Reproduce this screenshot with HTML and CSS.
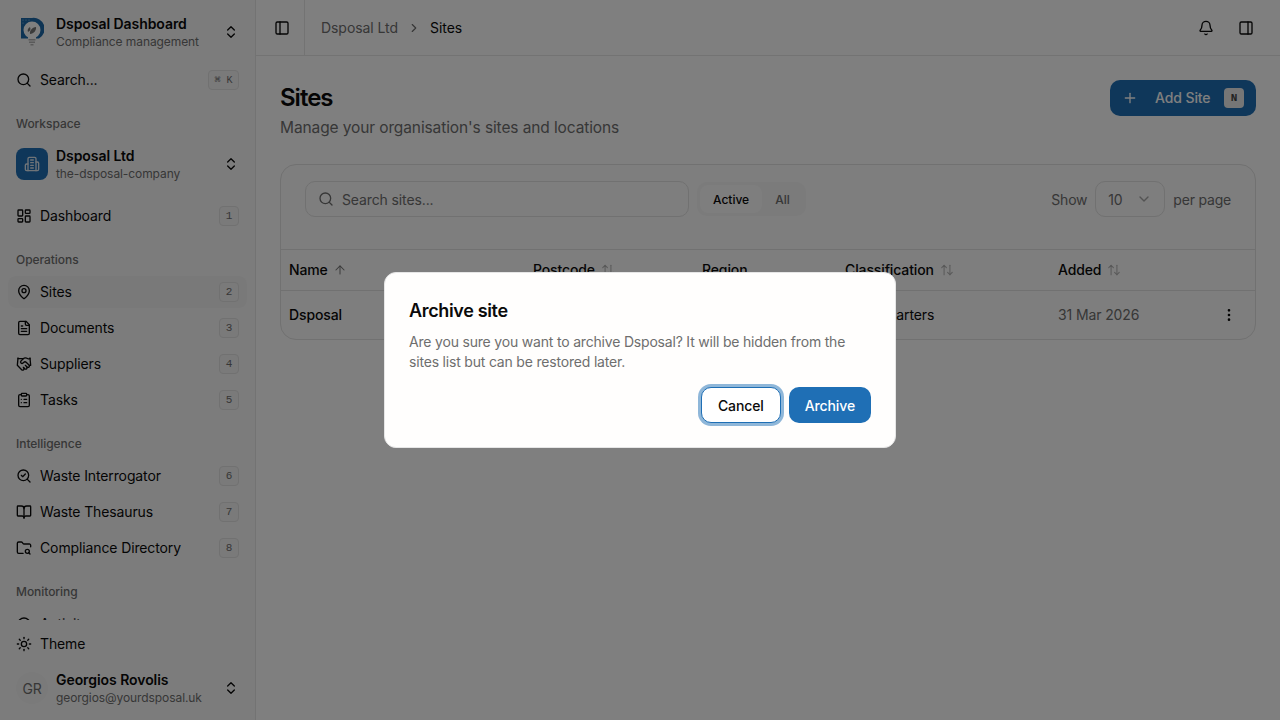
FILE: index.html
```html
<!DOCTYPE html>
<html lang="en">
<head>
<meta charset="utf-8">
<title>Sites</title>
<link rel="stylesheet" href="styles.css">
</head>
<body>
<svg class="defs" width="0" height="0" aria-hidden="true">
  <symbol id="i-search" viewBox="0 0 24 24"><circle cx="11" cy="11" r="8"/><path d="m21 21-4.3-4.3"/></symbol>
  <symbol id="i-updown" viewBox="0 0 24 24"><path d="m7 15 5 5 5-5"/><path d="m7 9 5-5 5 5"/></symbol>
  <symbol id="i-dash" viewBox="0 0 24 24"><rect width="7" height="9" x="3" y="3" rx="1"/><rect width="7" height="5" x="14" y="3" rx="1"/><rect width="7" height="9" x="14" y="12" rx="1"/><rect width="7" height="5" x="3" y="16" rx="1"/></symbol>
  <symbol id="i-pin" viewBox="0 0 24 24"><path d="M20 10c0 4.993-5.539 10.193-7.399 11.799a1 1 0 0 1-1.202 0C9.539 20.193 4 14.993 4 10a8 8 0 0 1 16 0"/><circle cx="12" cy="10" r="3"/></symbol>
  <symbol id="i-file" viewBox="0 0 24 24"><path d="M15 2H6a2 2 0 0 0-2 2v16a2 2 0 0 0 2 2h12a2 2 0 0 0 2-2V7Z"/><path d="M14 2v4a2 2 0 0 0 2 2h4"/><path d="M10 9H8"/><path d="M16 13H8"/><path d="M16 17H8"/></symbol>
  <symbol id="i-hands" viewBox="0 0 24 24"><path d="m11 17 2 2a1 1 0 1 0 3-3"/><path d="m14 14 2.5 2.5a1 1 0 1 0 3-3l-3.88-3.88a3 3 0 0 0-4.24 0l-.88.88a1 1 0 1 1-3-3l2.81-2.81a5.79 5.79 0 0 1 7.06-.87l.47.28a2 2 0 0 0 1.42.25L21 4"/><path d="m21 3 1 11h-2"/><path d="M3 3 2 14l6.5 6.5a1 1 0 1 0 3-3"/><path d="M3 4h8"/></symbol>
  <symbol id="i-clip" viewBox="0 0 24 24"><rect width="8" height="4" x="8" y="2" rx="1"/><path d="M16 4h2a2 2 0 0 1 2 2v14a2 2 0 0 1-2 2H6a2 2 0 0 1-2-2V6a2 2 0 0 1 2-2h2"/><path d="M12 11h4"/><path d="M12 16h4"/><path d="M8 11h.01"/><path d="M8 16h.01"/></symbol>
  <symbol id="i-scheck" viewBox="0 0 24 24"><path d="m8 11 2 2 4-4"/><circle cx="11" cy="11" r="8"/><path d="m21 21-4.3-4.3"/></symbol>
  <symbol id="i-book" viewBox="0 0 24 24"><path d="M12 7v14"/><path d="M3 18a1 1 0 0 1-1-1V4a1 1 0 0 1 1-1h5a4 4 0 0 1 4 4 4 4 0 0 1 4-4h5a1 1 0 0 1 1 1v13a1 1 0 0 1-1 1h-6a3 3 0 0 0-3 3 3 3 0 0 0-3-3z"/></symbol>
  <symbol id="i-folder" viewBox="0 0 24 24"><path d="M10.7 20H4a2 2 0 0 1-2-2V5a2 2 0 0 1 2-2h3.9a2 2 0 0 1 1.69.9l.81 1.2a2 2 0 0 0 1.67.9H20a2 2 0 0 1 2 2v2.3"/><circle cx="17" cy="17" r="3"/><path d="m21 21-1.9-1.9"/></symbol>
  <symbol id="i-activity" viewBox="0 0 24 24"><circle cx="12" cy="12" r="9"/><path d="M12 7v5l3 2"/></symbol>
  <symbol id="i-sun" viewBox="0 0 24 24"><circle cx="12" cy="12" r="4"/><path d="M12 2v2"/><path d="M12 20v2"/><path d="m4.93 4.93 1.41 1.41"/><path d="m17.66 17.66 1.41 1.41"/><path d="M2 12h2"/><path d="M20 12h2"/><path d="m6.34 17.66-1.41 1.41"/><path d="m19.07 4.93-1.41 1.41"/></symbol>
  <symbol id="i-pleft" viewBox="0 0 24 24"><rect width="18" height="18" x="3" y="3" rx="2"/><path d="M9 3v18"/></symbol>
  <symbol id="i-pright" viewBox="0 0 24 24"><rect width="18" height="18" x="3" y="3" rx="2"/><path d="M15 3v18"/></symbol>
  <symbol id="i-bell" viewBox="0 0 24 24"><path d="M10.268 21a2 2 0 0 0 3.464 0"/><path d="M3.262 15.326A1 1 0 0 0 4 17h16a1 1 0 0 0 .74-1.673C19.41 13.956 18 12.499 18 8A6 6 0 0 0 6 8c0 4.499-1.411 5.956-2.738 7.326"/></symbol>
  <symbol id="i-right" viewBox="0 0 24 24"><path d="m9 18 6-6-6-6"/></symbol>
  <symbol id="i-down" viewBox="0 0 24 24"><path d="m6 9 6 6 6-6"/></symbol>
  <symbol id="i-plus" viewBox="0 0 24 24"><path d="M5 12h14"/><path d="M12 5v14"/></symbol>
  <symbol id="i-up" viewBox="0 0 24 24"><path d="m5 12 7-7 7 7"/><path d="M12 19V5"/></symbol>
  <symbol id="i-sort" viewBox="0 0 24 24"><path d="m21 16-4 4-4-4"/><path d="M17 20V4"/><path d="m3 8 4-4 4 4"/><path d="M7 4v16"/></symbol>
  <symbol id="i-more" viewBox="0 0 24 24"><circle cx="12" cy="12" r="1"/><circle cx="12" cy="5" r="1"/><circle cx="12" cy="19" r="1"/></symbol>
  <symbol id="i-org" viewBox="0 0 24 24"><path d="M6 22V4a2 2 0 0 1 2-2h8a2 2 0 0 1 2 2v18Z"/><path d="M6 12H4a2 2 0 0 0-2 2v6a2 2 0 0 0 2 2h2"/><path d="M18 9h2a2 2 0 0 1 2 2v9a2 2 0 0 1-2 2h-2"/><path d="M10 6h4"/><path d="M10 10h4"/><path d="M10 14h4"/><path d="M10 18h4"/></symbol>
</svg>

<div class="app">
  <aside class="sidebar">
    <div class="brand">
      <svg class="logo" viewBox="0 0 24 30" width="24" height="30" aria-hidden="true">
        <path class="logo-d" d="M1 1h11a11 11 0 0 1 7 20.500H1z"/>
        <circle class="logo-bulb" cx="12" cy="13" r="8.500"/>
        <path class="logo-bulb" d="M8 19h8v4H8z"/>
        <path class="logo-leaf" d="M10 17c-.5-3.500 2-6.500 6-7 .5 3.500-2 6.500-6 7zM8 15c-1-2 0-4 2-5 1 2 .5 4-2 5z"/>
        <path class="logo-base" d="M8.500 22h7v1.500h-7zM9 24.500h6V26H9zM10.500 27h3v1.500h-3z"/>
        <circle class="logo-dot" cx="3" cy="3" r=".6"/><circle class="logo-dot" cx="6" cy="3" r=".6"/><circle class="logo-dot" cx="9" cy="3" r=".6"/><circle class="logo-dot" cx="3" cy="6" r=".6"/>
      </svg>
      <div class="two-line">
        <strong>Dsposal Dashboard</strong>
        <span>Compliance management</span>
      </div>
      <svg class="ic updown"><use href="#i-updown"/></svg>
    </div>

    <div class="search-row">
      <svg class="ic"><use href="#i-search"/></svg>
      <span class="grow">Search...</span>
      <kbd class="kbd wide">⌘ K</kbd>
    </div>

    <div class="group-label first">Workspace</div>
    <div class="org">
      <span class="org-icon"><svg class="ic"><use href="#i-org"/></svg></span>
      <div class="two-line">
        <strong>Dsposal Ltd</strong>
        <span>the-dsposal-company</span>
      </div>
      <svg class="ic updown"><use href="#i-updown"/></svg>
    </div>

    <nav class="nav">
      <a class="item"><svg class="ic"><use href="#i-dash"/></svg><span class="grow">Dashboard</span><kbd class="kbd">1</kbd></a>
      <div class="group-label">Operations</div>
      <a class="item active"><svg class="ic"><use href="#i-pin"/></svg><span class="grow">Sites</span><kbd class="kbd">2</kbd></a>
      <a class="item"><svg class="ic"><use href="#i-file"/></svg><span class="grow">Documents</span><kbd class="kbd">3</kbd></a>
      <a class="item"><svg class="ic"><use href="#i-hands"/></svg><span class="grow">Suppliers</span><kbd class="kbd">4</kbd></a>
      <a class="item"><svg class="ic"><use href="#i-clip"/></svg><span class="grow">Tasks</span><kbd class="kbd">5</kbd></a>
      <div class="group-label">Intelligence</div>
      <a class="item"><svg class="ic"><use href="#i-scheck"/></svg><span class="grow">Waste Interrogator</span><kbd class="kbd">6</kbd></a>
      <a class="item"><svg class="ic"><use href="#i-book"/></svg><span class="grow">Waste Thesaurus</span><kbd class="kbd">7</kbd></a>
      <a class="item"><svg class="ic"><use href="#i-folder"/></svg><span class="grow">Compliance Directory</span><kbd class="kbd">8</kbd></a>
      <div class="group-label">Monitoring</div>
      <a class="item"><svg class="ic"><use href="#i-activity"/></svg><span class="grow">Activity</span></a>
    </nav>

    <div class="foot">
      <a class="item"><svg class="ic"><use href="#i-sun"/></svg><span class="grow">Theme</span></a>
      <div class="user">
        <span class="avatar">GR</span>
        <div class="two-line">
          <strong>Georgios Rovolis</strong>
          <span>georgios@yourdsposal.uk</span>
        </div>
        <svg class="ic updown"><use href="#i-updown"/></svg>
      </div>
    </div>
  </aside>

  <main class="main">
    <header class="topbar">
      <div class="toggle"><svg class="ic"><use href="#i-pleft"/></svg></div>
      <div class="crumbs">
        <span class="crumb-muted">Dsposal Ltd</span>
        <svg class="ic crumb-sep"><use href="#i-right"/></svg>
        <span>Sites</span>
      </div>
      <div class="top-actions">
        <svg class="ic"><use href="#i-bell"/></svg>
        <svg class="ic"><use href="#i-pright"/></svg>
      </div>
    </header>

    <section class="content">
      <div class="page-head">
        <div>
          <h1>Sites</h1>
          <p>Manage your organisation's sites and locations</p>
        </div>
        <button class="add-btn">
          <svg class="ic"><use href="#i-plus"/></svg>
          <span>Add Site</span>
          <kbd class="kbd-n">N</kbd>
        </button>
      </div>

      <div class="card">
        <div class="toolbar">
          <div class="search-input">
            <svg class="ic"><use href="#i-search"/></svg>
            <span>Search sites...</span>
          </div>
          <div class="tabs">
            <span class="tab on">Active</span>
            <span class="tab">All</span>
          </div>
          <div class="pager">
            <span>Show</span>
            <div class="select"><span>10</span><svg class="ic"><use href="#i-down"/></svg></div>
            <span>per page</span>
          </div>
        </div>
        <table class="table">
          <colgroup>
            <col class="c-name"><col class="c-post"><col class="c-region"><col class="c-class"><col class="c-added"><col>
          </colgroup>
          <thead>
            <tr>
              <th>Name <svg class="ic sort up"><use href="#i-up"/></svg></th>
              <th>Postcode <svg class="ic sort"><use href="#i-sort"/></svg></th>
              <th>Region</th>
              <th>Classification <svg class="ic sort"><use href="#i-sort"/></svg></th>
              <th>Added <svg class="ic sort"><use href="#i-sort"/></svg></th>
              <th></th>
            </tr>
          </thead>
          <tbody>
            <tr>
              <td class="strong">Dsposal</td>
              <td></td>
              <td></td>
              <td>Headquarters</td>
              <td class="muted">31 Mar 2026</td>
              <td class="menu"><svg class="ic"><use href="#i-more"/></svg></td>
            </tr>
          </tbody>
        </table>
      </div>
    </section>
  </main>
</div>

<div class="overlay"></div>
<div class="dialog" role="alertdialog">
  <h2>Archive site</h2>
  <p>Are you sure you want to archive Dsposal? It will be hidden from the sites list but can be restored later.</p>
  <div class="dialog-actions">
    <button class="btn cancel">Cancel</button>
    <button class="btn archive">Archive</button>
  </div>
</div>
</body>
</html>
```

FILE: styles.css
```css
* { box-sizing: border-box; }
html, body { margin: 0; height: 100%; overflow: hidden; }
body { font-family: Inter, "Liberation Sans", sans-serif; font-size: 14px; letter-spacing: -0.12px; color: #0a0a0a; background: #fff; }
.defs { position: absolute; }
.ic { width: 16px; height: 16px; flex: none; fill: none; stroke: currentColor; stroke-width: 2; stroke-linecap: round; stroke-linejoin: round; }
.grow { flex: 1; min-width: 0; }
.app { display: flex; height: 720px; }

/* Sidebar */
.sidebar { width: 256px; flex: none; height: 720px; display: flex; flex-direction: column; background: #f9f9f9; border-right: 1px solid #e6e6e6; overflow: hidden; }
.brand { height: 64px; flex: none; display: flex; align-items: center; padding: 0 16px 0 20px; }
.logo { margin-right: 12px; flex: none; }
.logo-d { fill: #1c68a8; }
.logo-bulb { fill: #fff; }
.logo-leaf { fill: #777; }
.logo-base { fill: #b4b4b4; }
.logo-dot { fill: #9cc3e4; }
.two-line { flex: 1; min-width: 0; display: flex; flex-direction: column; }
.two-line strong { font-size: 14px; font-weight: 600; line-height: 20px; letter-spacing: -0.06px; white-space: nowrap; }
.two-line span { font-size: 12px; line-height: 16px; letter-spacing: -0.08px; color: #6e6e6e; white-space: nowrap; }
.updown { color: #0a0a0a; }
.search-row { height: 32px; flex: none; display: flex; align-items: center; gap: 8px; padding: 0 16px; }
.search-row .grow, .item .grow { padding-bottom: 2px; }
.kbd { width: 20px; height: 20px; display: flex; align-items: center; justify-content: center; flex: none; font-family: "Liberation Mono", monospace; font-size: 11px; letter-spacing: 0; color: #6e6e6e; background: #f4f4f4; border: 1px solid #e2e2e2; border-radius: 4px; }
.kbd.wide { width: 31px; font-size: 10px; }
.group-label { height: 16px; margin: 20px 8px 8px; font-size: 12px; font-weight: 500; line-height: 16px; letter-spacing: -0.05px; color: #6e6e6e; white-space: nowrap; flex: none; }
.group-label.first { margin: 19px 16px 17px; padding-top: 1px; }
.org { height: 32px; flex: none; display: flex; align-items: center; gap: 8px; padding: 0 16px; margin-bottom: 20px; }
.org-icon { width: 32px; height: 32px; border-radius: 8px; background: #1f6fb5; color: #dfe8f0; display: flex; align-items: center; justify-content: center; flex: none; }
.nav { height: 420px; flex: none; padding: 0 8px; overflow: hidden; display: flex; flex-direction: column; gap: 4px; }
.nav .group-label { margin: 16px 8px 4px; }
.item { height: 32px; flex: none; display: flex; align-items: center; gap: 8px; padding: 0 8px; border-radius: 8px; white-space: nowrap; }
.item.active { background: #f3f3f3; }
.foot { flex: 1; display: flex; flex-direction: column; padding: 8px 8px 0; }
.user { height: 32px; display: flex; align-items: center; gap: 8px; padding: 0 8px; margin-top: 12px; flex: none; }
.avatar { width: 32px; height: 32px; border-radius: 50%; background: #f4f4f4; color: #6e6e6e; font-size: 14px; display: flex; align-items: center; justify-content: center; flex: none; }

/* Main */
.main { flex: 1; min-width: 0; display: flex; flex-direction: column; }
.topbar { height: 56px; flex: none; display: flex; align-items: center; border-bottom: 1px solid #e6e6e6; }
.toggle { width: 49px; height: 55px; display: flex; align-items: center; justify-content: center; border-right: 1px solid #e6e6e6; padding-left: 5px; padding-right: 1px; flex: none; }
.crumbs { flex: 1; display: flex; align-items: center; padding-left: 16px; white-space: nowrap; letter-spacing: -0.06px; }
.crumb-muted { color: #6e6e6e; }
.crumb-sep { margin: 0 9px; width: 14px; height: 14px; color: #6e6e6e; }
.top-actions { display: flex; align-items: center; gap: 24px; padding-right: 26px; }
.content { flex: 1; padding: 24px; }
.page-head { display: flex; justify-content: space-between; align-items: flex-start; height: 84px; }
h1 { margin: 2px 0 0; font-size: 24px; line-height: 32px; font-weight: 600; letter-spacing: -1px; }
.page-head p { margin: 2px 0 0; font-size: 15.500px; line-height: 24px; letter-spacing: -0.11px; color: #6e6e6e; }
.add-btn { width: 146px; height: 36px; border: 0; border-radius: 10px; background: #1f6fb5; color: #fff; font: 500 14px Inter, sans-serif; letter-spacing: -0.1px; display: flex; align-items: center; padding: 0 12px; }
.add-btn .ic { margin-right: 17px; }
.add-btn span { flex: 1; text-align: left; padding-bottom: 1px; }
.kbd-n { width: 20px; height: 20px; background: #ededed; color: #444; border-radius: 4px; font: 700 11px "Liberation Mono", monospace; display: flex; align-items: center; justify-content: center; }
.card { width: 976px; height: 176px; border: 1px solid #e2e2e2; border-radius: 16px; overflow: hidden; background: #fcfcfc; }
.toolbar { height: 85px; display: flex; align-items: flex-start; padding: 16px 24px 0; border-bottom: 1px solid #e2e2e2; }
.search-input { width: 384px; height: 36px; display: flex; align-items: center; gap: 8px; padding: 0 12px; border: 1px solid #e2e2e2; border-radius: 10px; color: #6e6e6e; }
.tabs { margin: 1px 0 0 8px; height: 34px; width: 109px; display: flex; align-items: center; padding: 3px; border-radius: 10px; background: #f6f6f6; font-size: 12px; font-weight: 500; letter-spacing: 0; color: #6e6e6e; }
.tab { height: 28px; display: flex; align-items: center; padding: 0 13px; border-radius: 8px; }
.tab.on { background: #fcfcfc; color: #0a0a0a; }
.pager { margin-left: auto; display: flex; align-items: center; gap: 8px; height: 36px; color: #6e6e6e; letter-spacing: -0.2px; }
.select { width: 70px; height: 36px; display: flex; align-items: center; justify-content: space-between; padding: 0 12px; border: 1px solid #e2e2e2; border-radius: 10px; }
.select .ic { opacity: .6; }
.table { width: 100%; border-collapse: collapse; table-layout: fixed; }
.c-name { width: 244px; } .c-post { width: 169px; } .c-region { width: 143px; } .c-class { width: 213px; } .c-added { width: 170px; }
th { height: 40px; padding: 0 8px; text-align: left; font-size: 14px; font-weight: 500; border-bottom: 1px solid #e2e2e2; white-space: nowrap; }
td { height: 49px; padding: 0 8px; white-space: nowrap; }
td.strong { font-weight: 500; }
td.muted { color: #6e6e6e; }
td.menu { padding-left: 1px; }
td.menu .ic { display: block; }
.sort { width: 14px; height: 14px; margin-left: 2px; vertical-align: -2px; opacity: .3; stroke-width: 1.750; }
.sort.up { opacity: .55; }

/* Modal */
.overlay { position: fixed; inset: 0; background: rgba(0, 0, 0, .5); }
.dialog { position: fixed; left: 384px; top: 272px; width: 512px; height: 176px; background: #fffefd; border: 1px solid #e6e6e6; border-radius: 12px; padding: 24px; }
.dialog h2 { margin: 0; font-size: 18px; line-height: 28px; font-weight: 600; letter-spacing: -0.35px; }
.dialog p { margin: 7px 0 0; line-height: 20px; letter-spacing: -0.19px; color: #6e6e6e; }
.dialog-actions { display: flex; justify-content: flex-end; gap: 8px; margin-top: 15px; }
.btn { height: 36px; border-radius: 10px; font: 500 14px Inter, sans-serif; letter-spacing: -0.12px; padding: 0 16px; }
.cancel { background: #fff; color: #0a0a0a; border: 1px solid #1f6fb5; box-shadow: 0 0 0 3px rgba(31, 111, 181, .5); }
.archive { background: #1f6fb5; color: #fff; border: 0; }
```
